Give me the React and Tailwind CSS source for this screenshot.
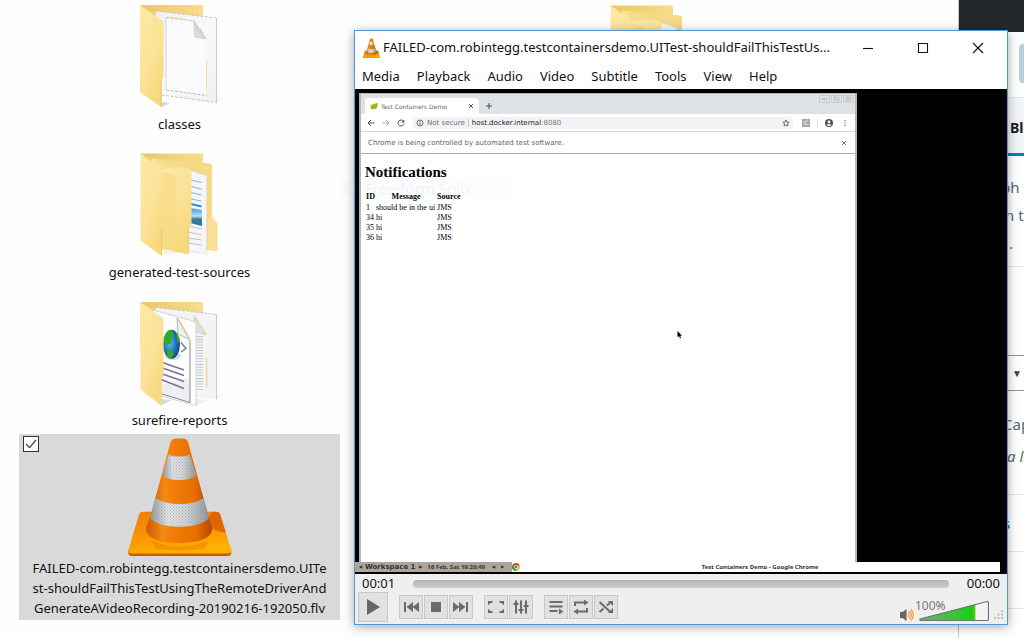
import React from "react";

/* ---------- file icons ---------- */

function FolderDefs({ id }) {
  return (
    <defs>
      <linearGradient id={`${id}-front`} x1="0" y1="0" x2="0.6" y2="1">
        <stop offset="0" stopColor="#fdeaa6" />
        <stop offset="0.6" stopColor="#fce298" />
        <stop offset="1" stopColor="#f8d87c" />
      </linearGradient>
      <linearGradient id={`${id}-back`} x1="0" y1="0" x2="1" y2="0">
        <stop offset="0" stopColor="#eac768" />
        <stop offset="1" stopColor="#f9dc8b" />
      </linearGradient>
      <linearGradient id={`${id}-page`} x1="0" y1="0" x2="1" y2="1">
        <stop offset="0" stopColor="#eef1f3" />
        <stop offset="0.5" stopColor="#f7f9fa" />
        <stop offset="1" stopColor="#eff0f1" />
      </linearGradient>
      <linearGradient id={`${id}-fold`} x1="0" y1="1" x2="1" y2="0">
        <stop offset="0" stopColor="#e9e9e9" />
        <stop offset="1" stopColor="#bdbdbd" />
      </linearGradient>
      <linearGradient id={`${id}-shade`} x1="0" y1="0" x2="1" y2="0">
        <stop offset="0" stopColor="#000" stopOpacity="0.16" />
        <stop offset="1" stopColor="#000" stopOpacity="0" />
      </linearGradient>
    </defs>
  );
}

function ClassesFolder() {
  return (
    <svg viewBox="0 0 128 120" className="h-[120px] w-32" aria-hidden="true">
      <FolderDefs id="cf" />
      <path d="M98 104 L112 104 L99 109 Z M45 108 L54 109 L46 113Z" fill="url(#cf-shade)" />
      <path d="M24 11 H86 Q87 11 87 12 V60 H24Z" fill="url(#cf-back)" />
      <path d="M39.500 17 L100.700 24 V108.500 L45 101Z" fill="url(#cf-page)" />
      <path d="M39.500 17 L100.700 24 M45.500 101 L100.700 108.500" stroke="#c2c5c8" strokeDasharray="3 1.500" fill="none" />
      <path d="M100.500 24 V108.500" stroke="#c9c9c9" />
      <path d="M50 23.500 L78 27 L90 44.500 V101 L50 96Z" fill="#f8fafb" />
      <path d="M50 23.500 L78 27 M50 96 L91 101.500" stroke="#b9bdc0" strokeDasharray="3 1.500" fill="none" />
      <path d="M50 23.500 V96" stroke="#d3d6d9" fill="none" />
      <path d="M51 23 L70 25.500 M84 34 L87 39 M90.700 67 V96" stroke="#f7d98c" fill="none" />
      <path d="M78 27 L78.700 43 L90 44.500Z" fill="url(#cf-fold)" stroke="#bbb" strokeWidth="0.600" />
      <path d="M24 11 L45.500 26 Q47.500 27.500 47.500 29.500 V82 Q47.500 84 45.700 86 V113.300 L24 98Z" fill="url(#cf-front)" />
      <path d="M44.500 86 V112.500 L45.700 113.300 V86Z" fill="#dcb452" opacity="0.500" />
    </svg>
  );
}

function NestedFolder({ id }) {
  return (
    <svg viewBox="0 0 128 120" className="h-[120px] w-32" aria-hidden="true">
      <FolderDefs id={id} />
      <defs>
        <linearGradient id={`${id}-sky`} x1="0" y1="0" x2="0" y2="1">
          <stop offset="0" stopColor="#3b9bd9" />
          <stop offset="0.450" stopColor="#b9e0f3" />
          <stop offset="0.600" stopColor="#4b7f9b" />
          <stop offset="1" stopColor="#1974b4" />
        </linearGradient>
      </defs>
      <path d="M24.500 11.500 H85.500 Q87 11.500 87 13 V40 H30Z" fill={`url(#${id}-back)`} />
      <path d="M35.700 16.300 L93.500 21.500 Q96 21.800 96 24 V74.500 L101.300 81.500 V107.500 Q101.300 109 99.500 109 L60 104Z" fill="#f6d985" />
      <path d="M96 74.500 L101.300 81.500 V109 L92 108 V76Z" fill="#f9df95" />
      <path d="M73 28 L90.700 33.700 V112.300 L72 109Z" fill="#f6f6f6" stroke="#d8d8d8" strokeWidth="0.600" />
      <path d="M75 38 L85.500 40.500 M75 44.500 L85.500 47 M75 50.500 L85.500 53 M75 57 L85.500 59" stroke="#7fb9de" strokeWidth="1.200" />
      <path d="M75 62 L85.500 64.500" stroke="#2f8fd0" strokeWidth="1.800" />
      <path d="M74 66 L86 68 V84 L74 81Z" fill={`url(#${id}-sky)`} />
      <path d="M72 84 L86 87 M72 90 L86 93 M72 96 L86 98 M72 101 L86 103" stroke="#c3c5c8" strokeWidth="1" />
      <path d="M35.700 16.300 L73 26.500 Q75.500 27.300 75.500 30 V82 L72.300 87 V112.300 L46 107Z" fill={`url(#${id}-front)`} />
      <path d="M48 30 L57 33 Q60 34 60 37 V78 L59 84 V110 L46 107Z" fill="#f5db86" opacity="0.600" />
      <path d="M35.700 16.300 L73 26.500 L60 25 L47 27Z" fill="#f3d179" opacity="0.500" />
      <path d="M24.500 11.500 L45.500 26 Q47.500 27.500 47.500 29.500 V82 Q47.500 84 45.700 86 V114 L24.500 98.500Z" fill={`url(#${id}-front)`} />
      <path d="M72.300 87 V112.300" stroke="#e8c465" strokeWidth="0.800" />
      <path d="M45.700 86 V113.500" stroke="#e8c465" strokeWidth="0.800" />
      <path d="M47 108 L62 111 L48 112Z" fill="#000" opacity="0.060" />
    </svg>
  );
}

function ReportsFolder() {
  return (
    <svg viewBox="0 0 128 120" className="h-[120px] w-32" aria-hidden="true">
      <FolderDefs id="rf" />
      <defs>
        <radialGradient id="rf-globe" cx="0.400" cy="0.450" r="0.650">
          <stop offset="0" stopColor="#5fc4f2" />
          <stop offset="0.450" stopColor="#2a7fca" />
          <stop offset="1" stopColor="#123a7e" />
        </radialGradient>
        <clipPath id="rf-clip">
          <ellipse cx="55.500" cy="54.300" rx="8.500" ry="14.500" />
        </clipPath>
      </defs>
      <path d="M98 104 L112 105 L99 110 Z M80 109 L92 110 L80 116Z M45 109 L56 110 L46 115Z" fill="url(#rf-shade)" />
      <path d="M24.500 12 H85.500 Q87 12 87 13.500 V60 H24.500Z" fill="url(#rf-back)" />
      <path d="M39 17.300 L100.700 24.500 V109.300 L60 105Z" fill="#f3f4f4" />
      <path d="M39 17.300 L100.700 24.500" stroke="#c2c5c8" strokeDasharray="3 1.500" />
      <path d="M100.500 24.500 V109" stroke="#c9c9c9" />
      <path d="M78 26.500 L79 42 L90 44.500Z" fill="#e1e1e1" stroke="#c0c0c0" strokeWidth="0.700" />
      <path d="M79 27 L90 44 M90.700 68 V98" stroke="#f3d488" strokeWidth="1.200" />
      <path d="M84 46 V102" stroke="#c2c2c2" strokeWidth="6" strokeDasharray="0.900 1.900" />
      <path d="M37 20 L77 31 Q80 32 80 34 V115.800 L45.700 106Z" fill="#fdfdfe" stroke="#c6c8ca" strokeWidth="0.800" />
      <path d="M46 95 L74 88 V112.500 L46 105Z" fill="#e3e4e7" opacity="0.600" />
      <path d="M74 50 V112.500 L46 104" stroke="#86898f" strokeWidth="1" fill="none" />
      <path d="M61 28 L62 44 L73.500 49.500Z" fill="#f1f1f2" stroke="#a7a7aa" strokeWidth="0.800" />
      <path d="M62 28 L73 47" stroke="#f0cf80" />
      <path d="M65 52.500 L70 58.500 L65 62" stroke="#6c6a93" strokeWidth="1.200" fill="none" />
      <ellipse cx="57" cy="66" rx="8" ry="4" fill="#000" opacity="0.150" />
      <ellipse cx="55.500" cy="54.300" rx="8.500" ry="14.500" fill="url(#rf-globe)" />
      <g clipPath="url(#rf-clip)" fill="#35a827">
        <path d="M47 44 Q51 38 56 40 L58 45 L55 49 L56 53 L51 55 L48 52Z" />
        <path d="M51 59 L56 60 L58 64 L55 69 L51 66Z" />
        <path d="M60 42 L64 46 L65 54 L61 51Z" />
      </g>
      <path d="M45 72 L68 80 M45 77.500 L68 85.500 M45 83.500 L68 91.500 M45 89.500 L68 98.500" stroke="#77759a" strokeWidth="1.600" />
      <path d="M24.500 12 L45.500 27 Q47.500 28.500 47.500 30.500 V84 Q47.500 86 45.700 88 V116 L24.500 99.500Z" fill="url(#rf-front)" />
    </svg>
  );
}

function Cone({ id, className }) {
  return (
    <svg viewBox="12 0 104 118" className={className} aria-hidden="true">
      <defs>
        <linearGradient id={`${id}-body`} x1="0" y1="0" x2="1" y2="0">
          <stop offset="0" stopColor="#c95a00" />
          <stop offset="0.250" stopColor="#f58a12" />
          <stop offset="0.450" stopColor="#ef7a05" />
          <stop offset="0.750" stopColor="#e86e00" />
          <stop offset="1" stopColor="#b24800" />
        </linearGradient>
        <linearGradient id={`${id}-band`} x1="0" y1="0" x2="1" y2="0">
          <stop offset="0" stopColor="#8f9699" />
          <stop offset="0.300" stopColor="#dfe3e5" />
          <stop offset="0.600" stopColor="#d3d7d9" />
          <stop offset="1" stopColor="#8d9396" />
        </linearGradient>
        <linearGradient id={`${id}-base`} x1="0" y1="0" x2="0.300" y2="1">
          <stop offset="0" stopColor="#f07d08" />
          <stop offset="0.500" stopColor="#f78f05" />
          <stop offset="1" stopColor="#ffb000" />
        </linearGradient>
        <pattern id={`${id}-mesh`} width="3" height="3" patternUnits="userSpaceOnUse">
          <path d="M0 0h1v1h-1zM1.500 1.500h1v1h-1z" fill="#8c9498" opacity="0.550" />
        </pattern>
      </defs>
      <path d="M12.300 112 V115 Q12.500 118 16 118 H112 Q115 118 115.300 115 V112Z" fill="#d25a00" />
      <path d="M27 73.700 H100 Q103.300 73.700 104.200 76.500 L115 111 Q116 115.500 112 115.500 H16 Q11.500 115.500 12.700 111 L23 76.500 Q24 73.700 27 73.700Z" fill={`url(#${id}-base)`} />
      <path d="M96 73.700 H100 Q103.300 73.700 104.200 76.500 L110 95 L98 92 L93 80Z" fill="#cf5200" opacity="0.650" />
      <path d="M36 103 Q63 114 92 103 L88 111 Q63 114 40 111Z" fill="#df6800" opacity="0.350" />
      <path d="M34 79 L30 90 Q31 105 63.500 105 Q95 105 96.500 90 L93 79Z" fill={`url(#${id}-body)`} />
      <path d="M54.500 4 Q56 0.500 60 0.500 H67 Q71 0.500 72 4 L93 80 Q85 89 63.500 89 Q42 89 34 80Z" fill={`url(#${id}-body)`} />
      <path d="M52.700 17 Q63 20 73.500 17 L80.500 37 Q75 42 63.500 42 Q52 42 46.300 37Z" fill={`url(#${id}-band)`} />
      <path d="M52.700 17 Q63 20 73.500 17 L80.500 37 Q75 42 63.500 42 Q52 42 46.300 37Z" fill={`url(#${id}-mesh)`} />
      <path d="M39.700 60 Q48 66 63.500 66 Q79 66 87.500 60 L93 80 Q85 88.700 63.500 88.700 Q42 88.700 34 80Z" fill={`url(#${id}-band)`} />
      <path d="M39.700 60 Q48 66 63.500 66 Q79 66 87.500 60 L93 80 Q85 88.700 63.500 88.700 Q42 88.700 34 80Z" fill={`url(#${id}-mesh)`} />
    </svg>
  );
}

function FileTile({ icon, children }) {
  return (
    <li className="flex h-[148px] flex-col items-center pt-1">
      {icon}
      <span className="leading-5 whitespace-nowrap">{children}</span>
    </li>
  );
}

function Explorer() {
  return (
    <section aria-label="Files" className="min-w-0 flex-1 pl-[19px]">
      <div className="-mt-2.5 flex gap-[149px]">
        <ul className="w-[321px] shrink-0">
          <FileTile icon={<ClassesFolder />}>classes</FileTile>
          <FileTile icon={<NestedFolder id="nf-one" />}>generated-test-sources</FileTile>
          <FileTile icon={<ReportsFolder />}>surefire-reports</FileTile>
          <li className="relative flex flex-col items-center bg-[#d9d9d9] pt-1 pb-0.5">
            <input
              id="pick-recording"
              type="checkbox"
              defaultChecked
              className="peer absolute top-0.5 left-1 size-4 appearance-none border border-[#333] bg-white"
            />
            <svg viewBox="0 0 16 16" className="pointer-events-none absolute top-0.5 left-1 hidden size-4 peer-checked:block" aria-hidden="true">
              <path d="M3 8 L6.500 11.500 L13 4" fill="none" stroke="#444" strokeWidth="1.200" />
            </svg>
            <Cone id="big-cone" className="h-[118px] w-[104px]" />
            <label htmlFor="pick-recording" className="mt-0.5 text-center leading-5 whitespace-nowrap">
              FAILED-com.robintegg.testcontainersdemo.UITe
              <br />
              st-shouldFailThisTestUsingTheRemoteDriverAnd
              <br />
              GenerateAVideoRecording-20190216-192050.flv
            </label>
          </li>
        </ul>
        <ul className="w-[321px] shrink-0">
          <FileTile icon={<NestedFolder id="nf-two" />} />
        </ul>
      </div>
    </section>
  );
}

/* ---------- page behind the player ---------- */

function EditorSidebar() {
  return (
    <aside className="w-[66px] shrink-0 overflow-hidden border-l border-[#c4c4c4] bg-white text-[15px] whitespace-nowrap text-[#5b646d]">
      <div className="h-8 bg-[#23282d]" />
      <div className="flex h-[66px] border-b border-[#e2e4e7] pt-3 pl-[60px]">
        <button type="button" aria-label="Update" className="h-[39px] w-20 shrink-0 rounded bg-[#b2d3de]" />
      </div>
      <div className="flex h-[58px] items-center border-b-3 border-[#0085ba] bg-[#f3f4f5] pt-1 pl-[51px]">
        <span className="text-sm font-bold text-[#191e23]">Block</span>
      </div>
      <div className="h-[111px] border-b border-[#e2e4e7] pt-[17px] pl-[42px] leading-7">
        <p>ph</p>
        <p className="pl-1">n the</p>
        <p className="pl-2">.</p>
      </div>
      <div className="h-[228px] border-b border-[#e2e4e7] pt-[88px]">
        <button type="button" aria-label="Size" className="block h-9 w-28 border-y border-[#8d96a0] pl-[53px] text-left text-[10px] text-[#444]">
          ▼
        </button>
        <p className="pt-[17px] pl-11 leading-8">
          Cap
          <br />
          <i className="pl-1">a lin</i>
        </p>
      </div>
      <div className="flex h-[57px] items-center border-b border-[#e2e4e7] pl-11">
        <a href="#links" className="text-[#0073aa]">s</a>
      </div>
      <div className="h-[57px] border-b border-[#e2e4e7]" />
    </aside>
  );
}

/* ---------- recorded browser ---------- */

function RecordedBrowser() {
  return (
    <div className="flex h-[469px] w-[498px] flex-col border-t border-r-2 border-l-2 border-[#b5b5b5] bg-white font-['DejaVu_Sans'] text-[7px] text-[#5f6368]">
      <div className="flex h-5 shrink-0 items-end bg-[#dee1e6] pl-1">
        <div className="flex h-4 w-[114px] items-center rounded-t bg-white px-[5px] text-[6px]">
          <svg viewBox="0 0 8 8" className="size-2" aria-hidden="true">
            <path d="M0.500 3 Q3 2 5 1.500 Q7 1 7.500 0.500 Q8.500 7 4 7.300 Q0 7.500 0.500 3Z" fill="#9bc522" />
            <path d="M1 6.500 Q5 6 7 2.500" stroke="#6d9a10" strokeWidth="0.700" fill="none" />
          </svg>
          <span className="ml-[3px] flex-1 whitespace-nowrap">Test Containers Demo</span>
          <button type="button" aria-label="Close tab" className="text-[#444]">
            <svg viewBox="0 0 6 6" className="size-1.5"><path d="M1 1 L5 5 M5 1 L1 5" stroke="currentColor" strokeWidth="0.900" /></svg>
          </button>
        </div>
        <button type="button" aria-label="New tab" className="mb-[5px] ml-[7px]">
          <svg viewBox="0 0 6 6" className="size-1.5"><path d="M3 0 V6 M0 3 H6" stroke="#555" strokeWidth="1.100" /></svg>
        </button>
        <div className="mr-px mb-[11px] ml-auto flex gap-px" aria-hidden="true">
          {["M3 5 H8 V3.500 H3Z", "M3 2 H8 V6 H3Z M3 3 L8 5", "M3.500 2 L7.500 6 M7.500 2 L3.500 6 M3 2 H8 V6 H3Z"].map((d) => (
            <svg key={d} viewBox="0 0 11 8" className="h-2 w-[11px]">
              <rect x="0.500" y="0.500" width="10" height="7" fill="#e0e2e5" stroke="#c2c5c9" strokeWidth="0.700" />
              <path d={d} fill="none" stroke="#b3b5b9" strokeWidth="0.700" />
            </svg>
          ))}
        </div>
      </div>
      <div className="flex h-[18px] shrink-0 items-center border-b border-[#d5d7da] pr-2 pl-1.5 text-[#4d5156]">
        <svg viewBox="0 0 8 8" className="size-2" aria-hidden="true"><path d="M7.500 4 H1 M4 1 L1 4 L4 7" stroke="currentColor" fill="none" /></svg>
        <svg viewBox="0 0 8 8" className="ml-[7px] size-2 text-[#a6a8ab]" aria-hidden="true"><path d="M0.500 4 H7 M4 1 L7 4 L4 7" stroke="currentColor" fill="none" /></svg>
        <svg viewBox="0 0 8 8" className="ml-[7px] size-2" aria-hidden="true"><path d="M6.600 2.400 A3 3 0 1 0 7 4.500" stroke="currentColor" fill="none" /><path d="M7.300 0.500 V3.500 H4.300Z" fill="currentColor" /></svg>
        <div className="ml-[7px] flex h-3 flex-1 items-center rounded-full bg-[#f1f3f4] pt-px pr-1 pl-1">
          <svg viewBox="0 0 8 8" className="size-2" aria-hidden="true"><circle cx="4" cy="4" r="3" fill="none" stroke="currentColor" strokeWidth="0.800" /><path d="M4 3.500 V6 M4 2 V2.900" stroke="currentColor" /></svg>
          <span className="ml-[3px] whitespace-nowrap text-[#6b6f74]">Not secure</span>
          <span className="mx-[3px] h-2 w-px bg-[#c5c7ca]" />
          <span className="whitespace-nowrap text-[#202124]">
            host.docker.internal<span className="text-[#777b80]">:8080</span>
          </span>
          <svg viewBox="0 0 8 8" className="ml-auto size-2" aria-hidden="true"><path d="M4 1 L4.900 3.100 L7.200 3.300 L5.500 4.800 L6 7 L4 5.800 L2 7 L2.500 4.800 L0.800 3.300 L3.100 3.100Z" fill="none" stroke="currentColor" strokeWidth="0.800" /></svg>
        </div>
        <span className="ml-2 flex size-2 items-center justify-center bg-[#a9a9a9] text-[6px] leading-none text-white">C</span>
        <span className="mx-[7px] h-2 w-px bg-[#d5d7da]" />
        <svg viewBox="0 0 8 8" className="size-2" aria-hidden="true"><circle cx="4" cy="4" r="4" fill="currentColor" /><circle cx="4" cy="2.900" r="1.400" fill="#fff" /><path d="M1.500 6 Q4 3.800 6.500 6 Q4 8 1.500 6Z" fill="#fff" /></svg>
        <svg viewBox="0 0 4 8" className="ml-2.5 h-2 w-1" aria-hidden="true"><path d="M1.500 1h1v1.200h-1zM1.500 3.400h1v1.200h-1zM1.500 5.800h1v1.200h-1z" fill="currentColor" /></svg>
      </div>
      <div className="flex h-[22px] shrink-0 items-center border-b border-[#adadad] pt-px pr-2 pl-[7px]">
        <span className="flex-1">Chrome is being controlled by automated test software.</span>
        <button type="button" aria-label="Dismiss">
          <svg viewBox="0 0 6 6" className="block size-1.5"><path d="M1 1 L5 5 M5 1 L1 5" stroke="#666" strokeWidth="0.900" /></svg>
        </button>
      </div>
      <div className="pt-2 pl-1 font-['Liberation_Serif'] text-black">
        <h1 className="text-[15px] leading-5 font-bold">Notifications</h1>
        <table className="mt-2.5 text-[8px] leading-[10px] [&_td]:pl-px [&_th]:pb-px [&_th]:pl-px">
          <thead>
            <tr><th>ID</th><th>Message</th><th>Source</th></tr>
          </thead>
          <tbody>
            {[["1", "should be in the ui"], ["34", "hi"], ["35", "hi"], ["36", "hi"]].map(([id, msg]) => (
              <tr key={id}><td className="pr-px">{id}</td><td className="pr-px">{msg}</td><td>JMS</td></tr>
            ))}
          </tbody>
        </table>
      </div>
    </div>
  );
}

function Taskbar() {
  return (
    <div className="mr-[7px] flex h-2.5 items-center bg-white text-[6px] leading-none font-bold whitespace-nowrap text-[#333]">
      <div className="flex h-full w-[157px] items-center gap-[3px] bg-[#aca59b] pl-1">
        <span className="text-[4px]">◀</span>
        <span className="font-['DejaVu_Sans'] text-[7px]">Workspace 1</span>
        <span className="text-[4px]">▶</span>
        <span className="ml-[3px]">16 Feb, Sat 19:20:49</span>
        <span className="ml-1 text-[4px]">◀</span>
        <span className="ml-[3px] text-[4px]">▶</span>
      </div>
      <svg viewBox="0 0 8 8" className="size-2" aria-hidden="true">
        <circle cx="4" cy="4" r="4" fill="#f2c22b" />
        <path d="M4 4 L0.540 2 A4 4 0 0 1 7.460 2Z" fill="#df3b2f" />
        <path d="M4 4 L0.540 2 A4 4 0 0 0 4 8Z" fill="#2c9f4b" />
        <circle cx="4" cy="4" r="1.900" fill="#fff" />
        <circle cx="4" cy="4" r="1.400" fill="#3f7de8" />
      </svg>
      <span className="flex-1 text-center">Test Containers Demo - Google Chrome</span>
    </div>
  );
}

/* ---------- player ---------- */

function ControlButton({ label, children }) {
  return (
    <button type="button" aria-label={label} className="flex size-6 items-center justify-center border border-[#c9c9c9] bg-[#e1e1e1] text-[#6b6b6b]">
      <svg viewBox="0 0 18 18" className="size-[18px]" fill="none" stroke="currentColor" strokeWidth="2">
        {children}
      </svg>
    </button>
  );
}

function Player() {
  return (
    <section
      aria-label="Media player"
      className="absolute top-[30px] right-4 left-[354px] border border-[#4b9ade] bg-white shadow-[0_2px_10px_rgba(0,0,0,0.35)]"
    >
      <header className="flex h-[34px] items-center pr-0.5 pl-2">
        <Cone id="small-cone" className="h-5 w-[17px] shrink-0" />
        <h2 className="ml-[3px] min-w-0 flex-1 whitespace-nowrap">
          FAILED-com.robintegg.testcontainersdemo.UITest-shouldFailThisTestUs...
        </h2>
        <div className="flex text-[#111]">
          {[["Minimize", "M0 5.500 H10"], ["Maximize", "M0.500 0.500 H9.500 V9.500 H0.500Z"], ["Close", "M0 0 L10 10 M10 0 L0 10"]].map(([name, d]) => (
            <button key={name} type="button" aria-label={name} className="flex h-8 w-[55px] items-center justify-center">
              <svg viewBox="0 0 10 10" className="size-2.5 overflow-visible" fill="none" stroke="currentColor" strokeWidth="1.100"><path d={d} /></svg>
            </button>
          ))}
        </div>
      </header>
      <nav aria-label="Menu" className="flex h-6 items-center gap-[17px] pl-[7px]">
        {["Media", "Playback", "Audio", "Video", "Subtitle", "Tools", "View", "Help"].map((m) => (
          <button key={m} type="button">{m}</button>
        ))}
      </nav>
      <div className="bg-black pt-1 pb-0.5">
        <div className="pl-1">
          <RecordedBrowser />
        </div>
        <Taskbar />
      </div>
      <footer className="bg-[#efefef] pt-px pb-0.5">
        <div className="flex h-[17px] items-center gap-[18px] px-[7px]">
          <span>00:01</span>
          <input
            type="range"
            aria-label="Position"
            defaultValue="0"
            className="h-2 min-w-0 flex-1 appearance-none rounded bg-linear-to-b from-[#b4b4b4] to-[#cdcdcd] [&::-webkit-slider-thumb]:size-0 [&::-webkit-slider-thumb]:appearance-none"
          />
          <span>00:00</span>
        </div>
        <div className="flex items-center gap-[11px] px-[3px]">
          <button type="button" aria-label="Play" className="flex size-[30px] items-center justify-center border border-[#c9c9c9] bg-[#e1e1e1]">
            <svg viewBox="0 0 14 16" className="h-4 w-3.5"><path d="M1 0 L14 8 L1 16Z" fill="#666" /></svg>
          </button>
          <div className="flex gap-px">
            <ControlButton label="Previous">
              <path d="M3 4 V14" />
              <path d="M11 4 V14 L4.500 9Z M17 4 V14 L10.500 9Z" fill="currentColor" stroke="none" />
            </ControlButton>
            <ControlButton label="Stop"><rect x="4" y="4" width="10" height="10" fill="currentColor" stroke="none" /></ControlButton>
            <ControlButton label="Next">
              <path d="M15 4 V14" />
              <path d="M7 4 V14 L13.500 9Z M1 4 V14 L7.500 9Z" fill="currentColor" stroke="none" />
            </ControlButton>
          </div>
          <div className="flex gap-px">
            <ControlButton label="Full screen"><path d="M2 6.500 V4 H5.500 M12.500 4 H16 V6.500 M16 11.500 V14 H12.500 M5.500 14 H2 V11.500" /></ControlButton>
            <ControlButton label="Extended settings"><path d="M4 2.500 V15.500 M9 2.500 V15.500 M14 2.500 V15.500 M1.500 6 H6.500 M6.500 12 H11.500 M11.500 8 H16.500" /></ControlButton>
          </div>
          <div className="flex gap-px">
            <ControlButton label="Playlist">
              <path d="M2.500 4 H15.500 M2.500 8.500 H15.500 M2.500 13 H10.500" />
              <path d="M12 10.500 L16.500 13.500 L12 16.500Z" fill="currentColor" stroke="none" />
            </ControlButton>
            <ControlButton label="Loop">
              <path d="M3 8 V4.500 H13 M15 10 V13.500 H5" />
              <path d="M12 1.500 L16.500 4.500 L12 7.500Z M6 10.500 L1.500 13.500 L6 16.500Z" fill="currentColor" stroke="none" />
            </ControlButton>
            <ControlButton label="Random">
              <path d="M2.500 4 L13.500 14 M2.500 14 L6.500 10.500 M10 7.500 L13.500 4" />
              <path d="M11 3 H16 V8Z M11 15 H16 V10Z" fill="currentColor" stroke="none" />
            </ControlButton>
          </div>
          <div className="ml-auto flex items-end gap-[5px] self-end">
            <svg viewBox="0 0 14 14" className="size-3.5" aria-hidden="true">
              <path d="M0 4 H2.500 L6.500 1 V13 L2.500 10 H0Z" fill="#666" />
              <path d="M8 4.500 Q10 7 8 9.500 M9.500 3 Q13 7 9.500 11 M11 1.500 Q15.500 7 11 12.500" fill="none" stroke="#f69a2c" strokeWidth="1.200" />
            </svg>
            <label className="relative block h-[22px] w-[70px] text-xs leading-[14px] text-[#777]">
              <svg viewBox="0 0 70 22" className="absolute inset-0 h-[22px] w-[70px]" aria-hidden="true">
                <defs>
                  <linearGradient id="volume" x1="0" y1="0" x2="1" y2="0">
                    <stop offset="0" stopColor="#6fae6f" />
                    <stop offset="0.550" stopColor="#3fc13f" />
                    <stop offset="0.950" stopColor="#16cf16" />
                    <stop offset="1" stopColor="#8fc020" />
                  </linearGradient>
                </defs>
                <path d="M1 19 L68 1.500 Q69.500 1.500 69.500 3 V19 Q69.500 20.500 68 20.500 H2 Q0.500 20.500 1 19Z" fill="#f4f4f4" />
                <path d="M1 19 L56.500 4.500 V20.500 H2Z" fill="url(#volume)" />
                <path d="M1 19 L68 1.500 Q69.500 1.500 69.500 3 V19 Q69.500 20.500 68 20.500 H2 Q0.500 20.500 1 19Z" fill="none" stroke="#707070" strokeWidth="1.200" />
              </svg>
              <span className="absolute -top-px -left-1">100%</span>
              <input type="range" aria-label="Volume" defaultValue="80" className="absolute inset-0 w-full opacity-0" />
            </label>
            <svg viewBox="0 0 10 10" className="mb-0.5 size-2.5" fill="#bdbdbd" aria-hidden="true">
              <path d="M7 0h2v2h-2zM7 3.500h2v2h-2zM3.500 3.500h2v2h-2zM7 7h2v2h-2zM3.500 7h2v2h-2zM0 7h2v2h-2z" />
            </svg>
          </div>
        </div>
      </footer>
      <div aria-hidden="true" className="pointer-events-none absolute top-[147px] -left-4 w-[172px] bg-[#7f9fdf]/3 pl-[26px] text-[15px] leading-5 text-[#8090c0]/10">
        Free-form Snip
      </div>
      <svg viewBox="0 0 6 8" className="pointer-events-none absolute top-[300px] left-[322px] h-2 w-1.5" aria-hidden="true">
        <path d="M0.500 0 V6.300 L2 5 L3 7.500 L4 7 L3.100 4.700 H5Z" fill="#000" />
      </svg>
    </section>
  );
}

export default function App() {
  return (
    <main className="relative flex min-h-screen overflow-hidden bg-[#fefefe] font-['Noto_Sans',sans-serif] text-[13px] text-[#111]">
      <Explorer />
      <EditorSidebar />
      <Player />
    </main>
  );
}
